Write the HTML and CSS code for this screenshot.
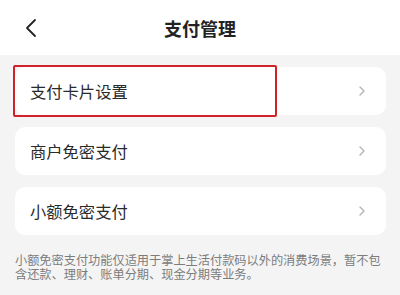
FILE: index.html
```html
<!DOCTYPE html>
<html lang="zh_CN">
<head>
    <meta charset="utf-8">
    <title>支付管理</title>
    <link rel="stylesheet" href="styles.css">
</head>
<body>
    <div class="header">
        <svg class="back" width="14" height="20" viewBox="0 0 14 20">
            <path d="M11 2 L3 10 L11 18" fill="none" stroke="#222" stroke-width="1.8" stroke-linecap="round" stroke-linejoin="round"/>
        </svg>
        <div class="title">支付管理</div>
    </div>
    <div class="page-content">
        <div class="card">
            <span class="mark"></span>
            <span class="label">支付卡片设置</span>
            <svg class="arrow" width="8" height="12" viewBox="0 0 8 12"><path d="M2 2 L6 6 L2 10" fill="none" stroke="#b4b4b4" stroke-width="1.4" stroke-linecap="round" stroke-linejoin="round"/></svg>
        </div>
        <div class="card">
            <span class="label">商户免密支付</span>
            <svg class="arrow" width="8" height="12" viewBox="0 0 8 12"><path d="M2 2 L6 6 L2 10" fill="none" stroke="#b4b4b4" stroke-width="1.4" stroke-linecap="round" stroke-linejoin="round"/></svg>
        </div>
        <div class="card">
            <span class="label">小额免密支付</span>
            <svg class="arrow" width="8" height="12" viewBox="0 0 8 12"><path d="M2 2 L6 6 L2 10" fill="none" stroke="#b4b4b4" stroke-width="1.4" stroke-linecap="round" stroke-linejoin="round"/></svg>
        </div>
        <p class="note">小额免密支付功能仅适用于掌上生活付款码以外的消费场景，暂不包含还款、理财、账单分期、现金分期等业务。</p>
    </div>
</body>
</html>
```

FILE: styles.css
```css
body {
    margin: 0;
    width: 400px;
    height: 295px;
    overflow: hidden;
    background: #f4f4f4;
    font-family: "Noto Sans CJK SC", "Noto Sans", sans-serif;
}
.header {
    position: relative;
    height: 55px;
    background: #fff;
    display: flex;
    align-items: center;
    justify-content: center;
}
.back {
    position: absolute;
    left: 24px;
    top: 18px;
}
.title {
    font-size: 18px;
    font-weight: bold;
    color: #222;
}
.page-content {
    padding: 12px 14px 0 15px;
    display: flex;
    flex-direction: column;
    gap: 12px;
}
.card {
    position: relative;
    height: 48px;
    background: #fff;
    border-radius: 10px;
    display: flex;
    align-items: center;
    justify-content: space-between;
    padding: 0 20px 0 15px;
}
.label {
    font-size: 16.3px;
    color: #2a2a2a;
}
.mark {
    position: absolute;
    left: -2px;
    top: -2px;
    width: 260px;
    height: 48px;
    border: 2px solid #d1222a;
    border-radius: 2px;
}
.note {
    margin: 7px 0 0 0;
    font-size: 12.2px;
    line-height: 13.5px;
    color: #7c7c7c;
}
```
